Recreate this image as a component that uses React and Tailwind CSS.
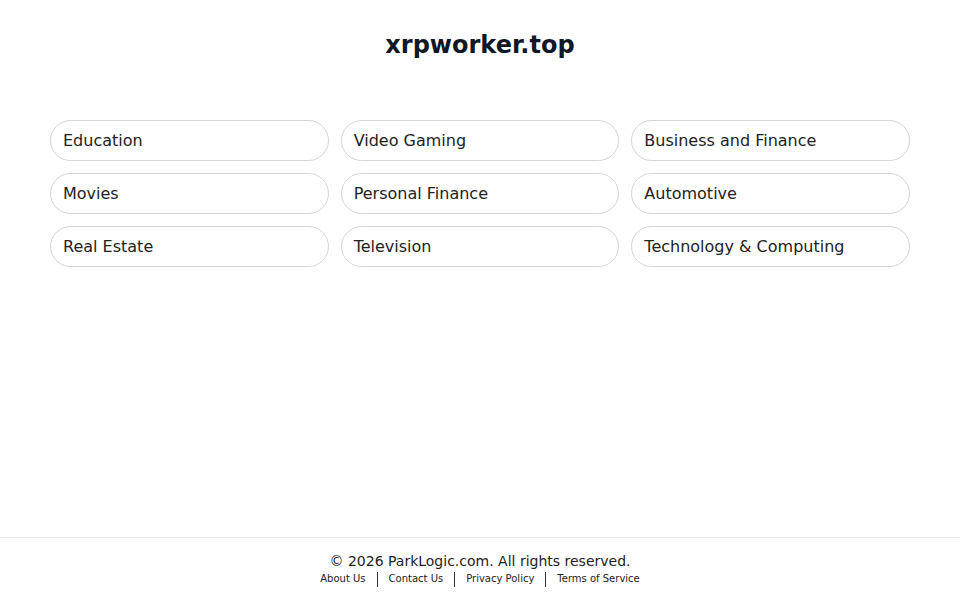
const topics = [
  "Education",
  "Video Gaming",
  "Business and Finance",
  "Movies",
  "Personal Finance",
  "Automotive",
  "Real Estate",
  "Television",
  "Technology & Computing",
]

const links = ["About Us", "Contact Us", "Privacy Policy", "Terms of Service"]

function App() {
  return (
    <div className="min-h-screen flex flex-col bg-white font-['DejaVu_Sans',sans-serif]">
      <main className="flex-1">
        <h1 className="pt-[29px] text-center text-2xl leading-8 font-bold text-gray-900">xrpworker.top</h1>
        <div className="mx-[50px] mt-[59px] grid grid-cols-3 gap-x-3 gap-y-3">
          {topics.map((t) => (
            <a
              key={t}
              href="#"
              className="h-[41px] flex items-center px-3 rounded-full border border-[#d4d4d4] text-base text-[#222]"
            >
              {t}
            </a>
          ))}
        </div>
      </main>
      <footer className="border-t border-[#e5e7eb] pt-[13px] pb-[13px] text-center">
        <p className="text-sm leading-5 text-[#222]">© 2026 ParkLogic.com. All rights reserved.</p>
        <div className="flex justify-center items-center h-4 text-[10px] leading-4 text-[#222]">
          {links.map((l, i) => (
            <span key={l} className="flex items-center">
              {i > 0 && <span className="mx-[11px] w-px h-[15px] bg-[#333]"></span>}
              <a href="#">{l}</a>
            </span>
          ))}
        </div>
      </footer>
    </div>
  )
}

export default App
